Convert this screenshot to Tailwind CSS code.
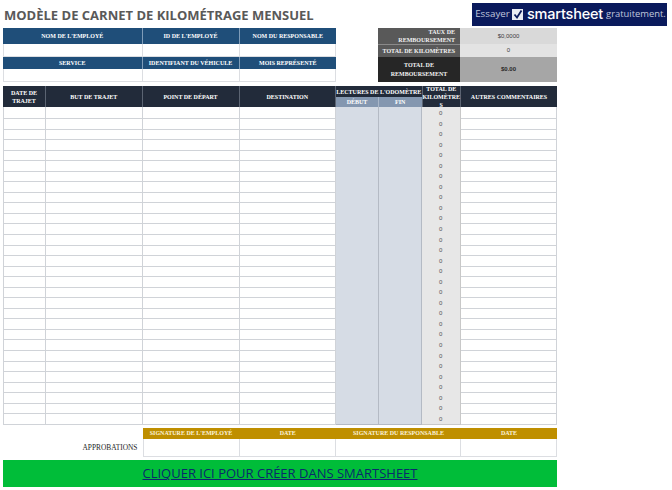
<!DOCTYPE html>
<html lang="fr">
<head>
<meta charset="UTF-8">
<title>Carnet de kilométrage</title>
<script src="https://cdn.jsdelivr.net/npm/@tailwindcss/browser@4"></script>
</head>
<body class="bg-white w-[672px] h-[490px] overflow-hidden font-['Liberation_Serif',serif]">
  <!-- title + logo -->
  <div class="flex h-[28px] pl-1 pr-[5px] pt-[3px]">
    <h1 class="font-['Open_Sans',sans-serif] font-bold text-[13px] leading-[24px] text-[#595959] whitespace-nowrap">MODÈLE DE CARNET DE KILOMÉTRAGE MENSUEL</h1>
    <div class="ml-auto w-[195px] h-[23px] bg-[#0a1a5c] flex items-center pl-[2px] font-['Open_Sans',sans-serif] text-[#c0c7dc]">
      <span class="text-[9.8px] w-[37px] text-center">Essayer</span>
      <svg class="ml-[1px]" width="11" height="11" viewBox="0 0 11 11"><rect width="11" height="11" fill="#e8ebf3"/><path d="M2.5 5.5 L5 8.5 L9.5 1.5" fill="none" stroke="#0a1a5c" stroke-width="1.8"/></svg>
      <span class="ml-[4px] font-['Inter',sans-serif] text-[14.5px] tracking-[-0.2px] leading-none font-medium text-white">smartsheet</span>
      <span class="ml-[3px] text-[9.4px] whitespace-nowrap">gratuitement.</span>
    </div>
  </div>

  <!-- info blocks -->
  <div class="flex pl-[3px] h-[54px] text-[6px] font-bold">
    <div class="w-[333px] grid grid-cols-[139.5px_97px_96.5px] grid-rows-[16px_13px_12px_13px] text-white">
      <div class="bg-[#1f4e79] border-r border-[#7f9cb8] flex items-center justify-center">NOM DE L'EMPLOYÉ</div>
      <div class="bg-[#1f4e79] border-r border-[#7f9cb8] flex items-center justify-center">ID DE L'EMPLOYÉ</div>
      <div class="bg-[#1f4e79] flex items-center justify-center">NOM DU RESPONSABLE</div>
      <div class="border-r border-b border-l border-[#dcdee2]"></div>
      <div class="border-r border-b border-[#dcdee2]"></div>
      <div class="border-r border-b border-[#dcdee2]"></div>
      <div class="bg-[#1f4e79] border-r border-[#7f9cb8] flex items-center justify-center">SERVICE</div>
      <div class="bg-[#1f4e79] border-r border-[#7f9cb8] flex items-center justify-center">IDENTIFIANT DU VÉHICULE</div>
      <div class="bg-[#1f4e79] flex items-center justify-center">MOIS REPRÉSENTÉ</div>
      <div class="border-r border-b border-l border-[#dcdee2]"></div>
      <div class="border-r border-b border-[#dcdee2]"></div>
      <div class="border-r border-b border-[#dcdee2]"></div>
    </div>
    <div class="ml-[42px] w-[179px] grid grid-cols-[82px_97px] grid-rows-[16px_13px_25px]">
      <div class="bg-[#595959] text-[#f2f2f2] text-right leading-[8px] pr-[5px] flex items-center justify-end">TAUX DE<br>REMBOURSEMENT</div>
      <div class="bg-[#d9d9d9] text-[#404040] font-['Liberation_Sans',sans-serif] font-normal text-[6px] flex items-center justify-center">$0,0000</div>
      <div class="bg-[#595959] text-[#f2f2f2] border-t border-[#8a8a8a] flex items-center justify-end pr-[5px] whitespace-nowrap">TOTAL DE KILOMÈTRES</div>
      <div class="bg-[#e3e3e3] text-[#404040] font-['Liberation_Sans',sans-serif] font-normal text-[6px] flex items-center justify-center">0</div>
      <div class="bg-[#262626] text-[#f2f2f2] text-center leading-[9px] flex items-center justify-center">TOTAL DE<br>REMBOURSEMENT</div>
      <div class="bg-[#a6a6a6] text-[#262626] font-['Liberation_Sans',sans-serif] text-[6px] flex items-center justify-center">$0.00</div>
    </div>
  </div>

  <!-- trip log -->
  <div class="mt-[4px] ml-[3px] w-[554px] grid grid-cols-[43px_96.5px_97px_96.5px_43px_42.5px_39.5px_96px] grid-rows-[11px_10px] text-[6px] font-bold text-white leading-[8px]">
    <div class="row-span-2 bg-[#222b3a] border-r border-[#5b6472] flex items-center justify-center text-center">DATE DE<br>TRAJET</div>
    <div class="row-span-2 bg-[#222b3a] border-r border-[#5b6472] flex items-center justify-center">BUT DE TRAJET</div>
    <div class="row-span-2 bg-[#222b3a] border-r border-[#5b6472] flex items-center justify-center">POINT DE DÉPART</div>
    <div class="row-span-2 bg-[#222b3a] border-r border-[#5b6472] flex items-center justify-center">DESTINATION</div>
    <div class="col-span-2 bg-[#222b3a] flex items-center justify-center whitespace-nowrap">LECTURES DE L'ODOMÈTRE</div>
    <div class="row-span-2 bg-[#222b3a] border-x border-[#5b6472] flex items-center justify-center text-center">TOTAL DE<br>KILOMÈTRE<br>S</div>
    <div class="row-span-2 bg-[#222b3a] flex items-center justify-center">AUTRES COMMENTAIRES</div>
    <div class="bg-[#8497b0] border-r border-[#a9b6c8] flex items-center justify-center">DÉBUT</div>
    <div class="bg-[#8497b0] flex items-center justify-center">FIN</div>
  </div>
  <div id="rows" class="ml-[3px] w-[554px]"></div>

  <!-- approvals -->
  <div class="mt-[5px] ml-[3px] w-[554px] grid grid-cols-[139.5px_97px_96.5px_125px_96px] grid-rows-[10.5px_18px]">
    <div class="row-span-2 pr-[5px] pt-[10.5px] flex items-center justify-end text-[#262626] text-[7.4px]">APPROBATIONS</div>
    <div class="bg-[#bf8f00] text-[#fbf3dc] font-bold text-[6px] flex items-center justify-center">SIGNATURE DE L'EMPLOYÉ</div>
    <div class="bg-[#bf8f00] text-[#fbf3dc] font-bold text-[6px] flex items-center justify-center">DATE</div>
    <div class="bg-[#bf8f00] text-[#fbf3dc] font-bold text-[6px] flex items-center justify-center">SIGNATURE DU RESPONSABLE</div>
    <div class="bg-[#bf8f00] text-[#fbf3dc] font-bold text-[6px] flex items-center justify-center">DATE</div>
    <div class="border-x border-b border-[#dcdee2]"></div>
    <div class="border-r border-b border-[#dcdee2]"></div>
    <div class="border-r border-b border-[#dcdee2]"></div>
    <div class="border-r border-b border-[#dcdee2]"></div>
  </div>

  <a href="#" class="mt-[3.5px] ml-[3px] w-[554px] h-[27px] bg-[#00bd39] flex items-center justify-center font-['Open_Sans',sans-serif] text-[13px] text-[#0a2a6c] underline">CLIQUER ICI POUR CRÉER DANS SMARTSHEET</a>

  <script>
    const rows = document.getElementById('rows');
    let html = '';
    for (let i = 0; i < 30; i++) {
      html += `<div class="grid grid-cols-[43px_96.5px_97px_96.5px_43px_42.5px_39.5px_96px] h-[10.55px]">
        <div class="border-x border-b border-[#d0d3d8]"></div>
        <div class="border-r border-b border-[#d0d3d8]"></div>
        <div class="border-r border-b border-[#d0d3d8]"></div>
        <div class="border-r border-b border-[#d0d3d8]"></div>
        <div class="bg-[#d6dce5] border-r border-b border-[#b4bac4]"></div>
        <div class="bg-[#d6dce5] border-r border-b border-[#b4bac4]"></div>
        <div class="bg-[#e7e7e7] border-r border-b border-[#c8c8c8] flex items-center justify-center font-['Liberation_Sans',sans-serif] text-[6px] leading-[10px] pt-px text-[#555]">0</div>
        <div class="border-r border-b border-[#d0d3d8]"></div>
      </div>`;
    }
    rows.innerHTML = html;
  </script>
</body>
</html>
